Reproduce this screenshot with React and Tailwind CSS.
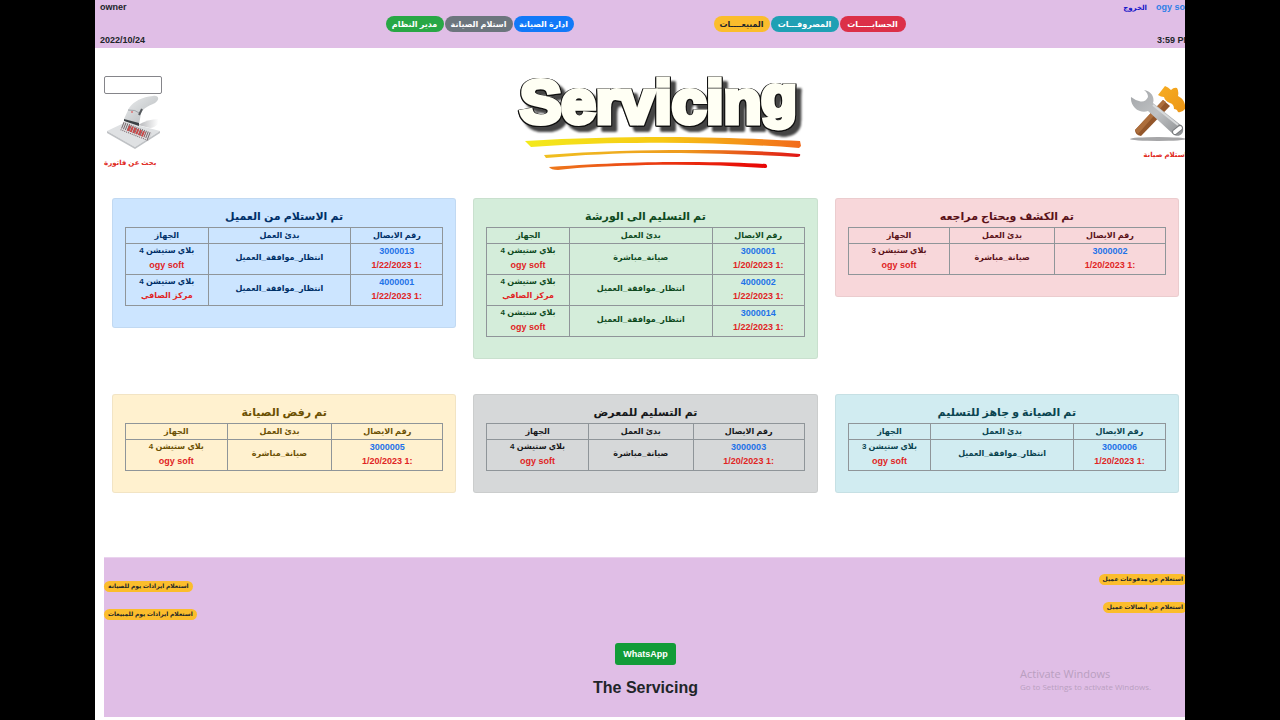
import clsx from 'clsx';

const wide = ['w-[29%]', 'w-[45%]', 'w-[26%]'];
const even = ['w-[35%]', 'w-[33%]', 'w-[32%]'];

const boards = [
   {
      title: 'تم الاستلام من العميل',
      color: 'bg-[#cce5ff] text-[#003068]',
      cols: wide,
      rows: [
         { id: '3000013', date: '1/22/2023 1:', work: 'انتظار_موافقة_العميل', device: 'بلاي ستيشن 4', client: 'ogy soft' },
         { id: '4000001', date: '1/22/2023 1:', work: 'انتظار_موافقة_العميل', device: 'بلاي ستيشن 4', client: 'مركز الصافي' }
      ]
   },
   {
      title: 'تم التسليم الى الورشة',
      color: 'bg-[#d4edda] text-[#0f4a1e]',
      cols: wide,
      rows: [
         { id: '3000001', date: '1/20/2023 1:', work: 'صيانة_مباشرة', device: 'بلاي ستيشن 4', client: 'ogy soft' },
         { id: '4000002', date: '1/22/2023 1:', work: 'انتظار_موافقة_العميل', device: 'بلاي ستيشن 4', client: 'مركز الصافي' },
         { id: '3000014', date: '1/22/2023 1:', work: 'انتظار_موافقة_العميل', device: 'بلاي ستيشن 4', client: 'ogy soft' }
      ]
   },
   {
      title: 'تم الكشف ويحتاج مراجعه',
      color: 'bg-[#f8d7da] text-[#5a1219]',
      cols: even,
      rows: [{ id: '3000002', date: '1/20/2023 1:', work: 'صيانة_مباشرة', device: 'بلاي ستيشن 3', client: 'ogy soft' }]
   },
   {
      title: 'تم رفض الصيانة',
      color: 'bg-[#fff1cf] text-[#6b5003]',
      cols: even,
      rows: [{ id: '3000005', date: '1/20/2023 1:', work: 'صيانة_مباشرة', device: 'بلاي ستيشن 4', client: 'ogy soft' }]
   },
   {
      title: 'تم التسليم للمعرض',
      color: 'bg-[#d6d8d9] text-[#16181b]',
      cols: even,
      rows: [{ id: '3000003', date: '1/20/2023 1:', work: 'صيانة_مباشرة', device: 'بلاي ستيشن 4', client: 'ogy soft' }]
   },
   {
      title: 'تم الصيانة و جاهز للتسليم',
      color: 'bg-[#d1ecf1] text-[#0a4450]',
      cols: wide,
      rows: [{ id: '3000006', date: '1/20/2023 1:', work: 'انتظار_موافقة_العميل', device: 'بلاي ستيشن 3', client: 'ogy soft' }]
   }
];

const adminLinks = [
   { label: 'مدير النظام', color: 'w-[58px] bg-[#28a745] text-white' },
   { label: 'استلام الصيانة', color: 'w-[68px] bg-[#6c757d] text-white' },
   { label: 'ادارة الصيانة', color: 'w-[60px] bg-[#1279f8] text-white' }
];

const salesLinks = [
   { label: 'المبيعــــات', color: 'w-[56px] bg-[#fbbd2c] text-[#212529]' },
   { label: 'المصروفـــات', color: 'w-[68px] bg-[#1fa0b4] text-white' },
   { label: 'الحسابـــــات', color: 'w-[66px] bg-[#dc3048] text-white' }
];

function NavGroup({ links }) {
   return (
      <div className="flex gap-px">
         {links.map((link) => (
            <a
               key={link.label}
               href="#"
               dir="rtl"
               className={clsx('flex h-4 items-center justify-center rounded-full text-[8px] whitespace-nowrap', link.color)}
            >
               {link.label}
            </a>
         ))}
      </div>
   );
}

function ReportLink({ children }) {
   return (
      <a
         href="#"
         dir="rtl"
         className="flex h-[11px] items-center rounded-full bg-[#fbbd2c] px-1 text-[6px] whitespace-nowrap text-[#212529]"
      >
         {children}
      </a>
   );
}

function Board({ board }) {
   return (
      <section className={clsx('rounded-[3px] border border-black/5 px-3 pt-2 pb-[21px]', board.color)}>
         <h2 dir="rtl" className="h-5 text-center text-[11px] leading-[18px]">
            {board.title}
         </h2>
         <table dir="rtl" className="w-full table-fixed border-collapse text-center text-[8px]">
            <thead>
               <tr className="h-4 leading-[14px]">
                  <th className={clsx('border border-[#8f9599] p-0', board.cols[0])}>رقم الايصال</th>
                  <th className={clsx('border border-[#8f9599] p-0', board.cols[1])}>بدئ العمل</th>
                  <th className={clsx('border border-[#8f9599] p-0', board.cols[2])}>الجهاز</th>
               </tr>
            </thead>
            <tbody>
               {board.rows.map((row) => (
                  <tr key={row.id} className="leading-[14px]">
                     <td dir="ltr" className="border border-[#8f9599] p-0 pb-0.5 text-[9px]">
                        <a href="#" className="block text-[#1f73e8]">{row.id}</a>
                        <span className="block text-[#e02424]">{row.date}</span>
                     </td>
                     <td className="border border-[#8f9599] p-0 pb-0.5 whitespace-nowrap">{row.work}</td>
                     <td className="border border-[#8f9599] p-0 pb-0.5 whitespace-nowrap">
                        <span className="block">{row.device}</span>
                        <span className={clsx('block text-[#e02424]', row.client === 'ogy soft' && 'text-[9px]')}>
                           {row.client}
                        </span>
                     </td>
                  </tr>
               ))}
            </tbody>
         </table>
      </section>
   );
}

function ServicingLogo() {
   return (
      <svg viewBox="0 0 292 104" className="h-[104px] w-[292px]" role="img" aria-label="Servicing">
         <defs>
            <linearGradient id="stripe1" x1="0" x2="1">
               <stop offset="0" stopColor="#f3ea1c" />
               <stop offset="0.5" stopColor="#f7c815" />
               <stop offset="1" stopColor="#f26a1b" />
            </linearGradient>
            <linearGradient id="stripe2" x1="0" x2="1">
               <stop offset="0" stopColor="#f0c020" />
               <stop offset="0.55" stopColor="#ee9a1e" />
               <stop offset="1" stopColor="#e01515" />
            </linearGradient>
            <linearGradient id="stripe3" x1="0" x2="1">
               <stop offset="0" stopColor="#ee7a1c" />
               <stop offset="0.5" stopColor="#ea3a12" />
               <stop offset="1" stopColor="#e80505" />
            </linearGradient>
         </defs>
         <text
            x="4"
            y="51"
            fontFamily="Liberation Sans"
            fontWeight="700"
            fontSize="62"
            fill="#fffff4"
            stroke="#fffff4"
            strokeWidth="5"
            className="[filter:drop-shadow(1px_0_0_#111)_drop-shadow(-1px_0_0_#111)_drop-shadow(0_1px_0_#111)_drop-shadow(5px_5px_1px_#444)]"
         >
            Servicin<tspan dy="-7" fontSize="58">g</tspan>
         </text>
         <path d="M9 69 C60 66 100 65 150 65 C200 65 245 67 284 69 L285 74 L283 76 C230 72 170 70 120 71 C80 71 45 73 15 75 Z" fill="url(#stripe1)" />
         <path d="M28 83 C80 79 130 78 170 78 C210 78 250 79 284 82 Q285 85 281 85 C230 82 180 81 140 81 C100 81 65 83 30 86 Z" fill="url(#stripe2)" />
         <path d="M33 95 C90 91 130 90 170 90 C205 90 230 91 250 92 Q253 96 248 96 C210 93 170 92 130 93 C100 94 65 95 42 98 Q35 98 33 95 Z" fill="url(#stripe3)" />
      </svg>
   );
}

function ScannerIcon() {
   return (
      <svg viewBox="0 0 58 56" className="h-14 w-[58px]" aria-hidden="true">
         <defs>
            <linearGradient id="handle" x1="0" x2="1" y2="1">
               <stop offset="0" stopColor="#eceeef" />
               <stop offset="1" stopColor="#b3b7ba" />
            </linearGradient>
            <linearGradient id="shade" x1="0" x2="1">
               <stop offset="0" stopColor="#b4b5b8" />
               <stop offset="1" stopColor="#ffffff" />
            </linearGradient>
         </defs>
         <path d="M34 31 C40 27 48 25 54 25 C56 28 52 34 46 34 Z" fill="url(#shade)" />
         <path d="M3 37 L22 28 L56 37 L31 53 Z" fill="#dfe1e3" />
         <path d="M3 37 L31 53 L56 37 L56 39 L31 55 L3 39 Z" fill="#bfc2c5" />
         <path d="M18 32 L46 43" stroke="#77696d" strokeWidth="9" strokeDasharray="1 1" />
         <path d="M24 34 L41 41" stroke="#c94a4a" strokeWidth="6" strokeDasharray="2 1" />
         <path d="M15 34 L43 45" stroke="#e3dfe1" strokeWidth="1" />
         <path d="M20 25 L25 14 C30 7 38 3 49 2 C55 1 56 6 51 9 C44 12 38 15 37 20 L35 30 Z" fill="url(#handle)" />
         <path d="M24 16 Q31 15 37 20" stroke="#9fa4a8" fill="none" />
         <path d="M20 25 L35 29 L35 32 L20 27 Z" fill="#3b4044" />
         <path d="M38 15 L35 21" stroke="#55595d" strokeWidth="2" />
         <circle cx="28" cy="18" r="1" fill="#d77" />
      </svg>
   );
}

function ToolsIcon() {
   return (
      <svg viewBox="0 0 58 58" className="h-[58px] w-[58px]" aria-hidden="true">
         <defs>
            <linearGradient id="steel" x1="0" y1="0" x2="1" y2="1">
               <stop offset="0" stopColor="#a2a5a8" />
               <stop offset="0.5" stopColor="#c0c2c4" />
               <stop offset="1" stopColor="#8b8e91" />
            </linearGradient>
            <linearGradient id="gold" x1="0" y1="0" x2="1" y2="1">
               <stop offset="0" stopColor="#f7ad22" />
               <stop offset="1" stopColor="#ec9616" />
            </linearGradient>
         </defs>
         <ellipse cx="29" cy="55" rx="28" ry="2" fill="#a6a6a8" />
         <path d="M6 46 L34 16 L41 22 L12 52 Q6 51 6 46 Z" fill="#93562a" />
         <path d="M6 46 L34 16 L37 18 L9 50 Z" fill="#ad6e3c" />
         <path d="M29 11 L36 2 Q39 3 42 6 Q45 3 48 4 Q50 7 49 12 C53 14 57 18 56 25 Q53 29 49 28 Q48 25 45 25 Q45 20 41 19 Q36 17 35 13 Q32 13 29 11 Z" fill="url(#gold)" />
         <path d="M15 6 C22 7 26 13 24 19 L53 42 C57 49 50 55 44 50 L19 27 C11 30 1 23 2 13 Q6 16 10 17 Q16 19 19 13 Q19 9 15 6 Z" fill="url(#steel)" />
         <path d="M24 21 L49 41" stroke="#d8dadb" strokeWidth="2" />
         <path d="M46 48 L51 44" stroke="#77797c" strokeWidth="6" strokeLinecap="round" />
         <path d="M46 48 L51 44" stroke="#fff" strokeWidth="4" strokeLinecap="round" />
      </svg>
   );
}

export default function App() {
   return (
      <div className="min-h-screen bg-black px-[95px] font-['Liberation_Sans','DejaVu_Sans',sans-serif] font-bold">
         <div className="min-h-screen overflow-hidden bg-white">
            {/* the page is a little wider than its frame, so the right edge is cut */}
            <div className="w-[calc(100%+11px)]">
               <header className="flex h-12 justify-between bg-[#e0bee6] px-[5px] py-0.5 text-[9px] leading-[11px] text-[#212529]">
                  <div className="flex w-20 flex-col justify-between">
                     <span>owner</span>
                     <span>2022/10/24</span>
                  </div>
                  <nav className="flex gap-[140px] pt-[14px]">
                     <NavGroup links={adminLinks} />
                     <NavGroup links={salesLinks} />
                  </nav>
                  <div className="flex w-20 flex-col items-end justify-between">
                     <div className="flex gap-[9px] whitespace-nowrap">
                        <a href="#" dir="rtl" className="text-[7px] text-[#1414c8]">الخروج</a>
                        <a href="#" className="text-[#2f7fe6]">ogy soft</a>
                     </div>
                     <span>3:59 PM</span>
                  </div>
               </header>

               <div className="flex h-[150px] items-start justify-between px-[9px] pt-6 text-[7px] text-[#e0281c]">
                  <form className="flex w-[58px] flex-col pt-1">
                     <input
                        type="text"
                        aria-label="بحث عن فاتورة"
                        className="h-[18px] w-full rounded-xs border border-[#85858a] bg-white px-1 text-black"
                     />
                     <ScannerIcon />
                     <button type="submit" dir="rtl" className="mt-2 text-left whitespace-nowrap">بحث عن فاتورة</button>
                  </form>
                  <div className="pl-8">
                     <ServicingLogo />
                  </div>
                  <a href="#" className="flex w-[58px] flex-col items-end pt-3">
                     <ToolsIcon />
                     <span dir="rtl" className="mt-2 whitespace-nowrap">استلام صيانة</span>
                  </a>
               </div>

               <main className="grid grid-cols-3 items-start gap-x-[17px] gap-y-[35px] px-[17px]">
                  {boards.map((board) => (
                     <Board key={board.title} board={board} />
                  ))}
               </main>

               <footer className="relative mx-[9px] mt-16 mb-[3px] flex h-40 flex-col items-center border-t border-[#ead3ee] bg-[#e0bee6]">
                  <div className="flex w-full justify-between pt-4">
                     <div className="flex flex-col items-start gap-[17px] pt-[7px]">
                        <ReportLink>استعلام ايرادات يوم للصيانة</ReportLink>
                        <ReportLink>استعلام ايرادات يوم للمبيعات</ReportLink>
                     </div>
                     <div className="flex flex-col items-end gap-[17px]">
                        <ReportLink>استعلام عن مدفوعات عميل</ReportLink>
                        <ReportLink>استعلام عن ايصالات عميل</ReportLink>
                     </div>
                  </div>
                  <a href="#" className="mt-[23px] rounded-[3px] bg-[#129c38] px-2 py-[5px] text-[9px] leading-3 text-white">
                     WhatsApp
                  </a>
                  <h1 className="mt-[13px] text-base leading-5 text-[#212529]">The Servicing</h1>
                  <div className="absolute right-8 bottom-6 w-[135px] font-['Open_Sans',sans-serif] font-normal whitespace-nowrap text-[#b99fc0]">
                     <p className="text-[11px] leading-[15px]">Activate Windows</p>
                     <p className="text-[8px] leading-3">Go to Settings to activate Windows.</p>
                  </div>
               </footer>
            </div>
         </div>
      </div>
   );
}
